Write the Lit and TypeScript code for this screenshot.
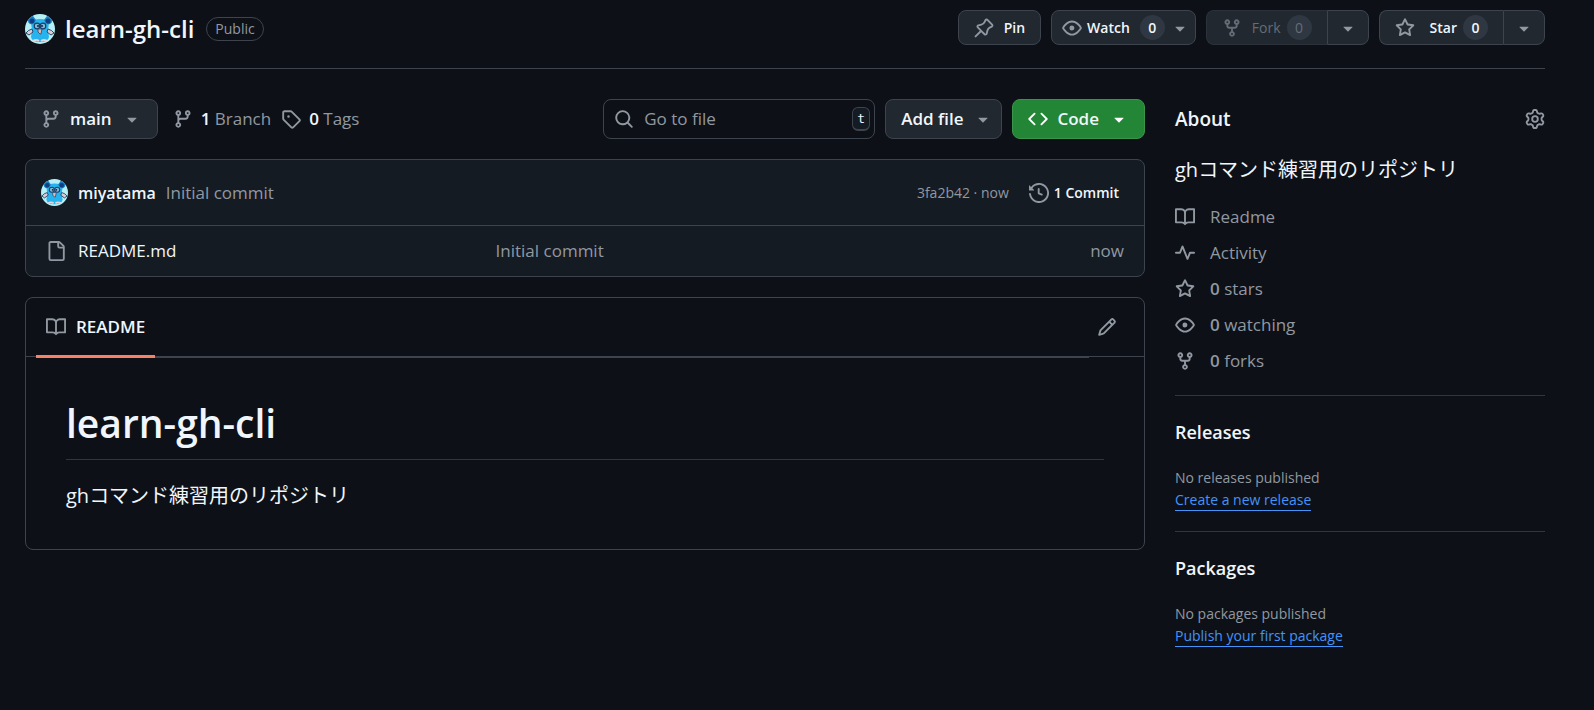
import { LitElement, html, css, svg } from "lit";
import { customElement, property } from "lit/decorators.js";

const ICONS: Record<string, string> = {
  pin: "m11.294.984 3.722 3.722a1.75 1.75 0 0 1-.504 2.826l-1.327.613a3.089 3.089 0 0 0-1.707 2.084l-.584 2.454c-.317 1.332-1.972 1.8-2.94.832L5.75 11.311 1.78 15.28a.749.749 0 1 1-1.06-1.06l3.969-3.97-2.204-2.204c-.968-.968-.5-2.623.832-2.94l2.454-.584a3.08 3.08 0 0 0 2.084-1.707l.613-1.327a1.75 1.75 0 0 1 2.826-.504ZM6.283 9.723l2.732 2.731a.25.25 0 0 0 .42-.119l.584-2.454a4.586 4.586 0 0 1 2.537-3.098l1.328-.613a.25.25 0 0 0 .072-.404l-3.722-3.722a.25.25 0 0 0-.404.072l-.613 1.328a4.584 4.584 0 0 1-3.098 2.537l-2.454.584a.25.25 0 0 0-.119.42l2.731 2.732Z",
  eye: "M8 2c1.981 0 3.671.992 4.933 2.078 1.27 1.091 2.187 2.345 2.637 3.023a1.62 1.62 0 0 1 0 1.798c-.45.678-1.367 1.932-2.637 3.023C11.67 13.008 9.981 14 8 14c-1.981 0-3.671-.992-4.933-2.078C1.797 10.83.88 9.576.43 8.898a1.62 1.62 0 0 1 0-1.798c.45-.677 1.367-1.931 2.637-3.022C4.33 2.992 6.019 2 8 2ZM1.679 7.932a.12.12 0 0 0 0 .136c.411.622 1.241 1.75 2.366 2.717C5.176 11.758 6.527 12.5 8 12.5c1.473 0 2.825-.742 3.955-1.715 1.124-.967 1.954-2.096 2.366-2.717a.12.12 0 0 0 0-.136c-.412-.621-1.242-1.75-2.366-2.717C10.824 4.242 9.473 3.5 8 3.5c-1.473 0-2.825.742-3.955 1.715-1.124.967-1.954 2.096-2.366 2.717ZM8 10a2 2 0 1 1-.001-3.999A2 2 0 0 1 8 10Z",
  fork: "M5 5.372v.878c0 .414.336.75.75.75h4.5a.75.75 0 0 0 .75-.75v-.878a2.25 2.25 0 1 1 1.5 0v.878a2.25 2.25 0 0 1-2.25 2.25h-1.5v2.128a2.251 2.251 0 1 1-1.5 0V8.5h-1.5A2.25 2.25 0 0 1 3.5 6.25v-.878a2.25 2.25 0 1 1 1.5 0ZM5 3.25a.75.75 0 1 0-1.5 0 .75.75 0 0 0 1.5 0Zm6.75.75a.75.75 0 1 0 0-1.5.75.75 0 0 0 0 1.5Zm-3 8.75a.75.75 0 1 0-1.5 0 .75.75 0 0 0 1.5 0Z",
  star: "M8 .25a.75.75 0 0 1 .673.418l1.882 3.815 4.21.612a.75.75 0 0 1 .416 1.279l-3.046 2.97.719 4.192a.751.751 0 0 1-1.088.791L8 12.347l-3.766 1.98a.75.75 0 0 1-1.088-.79l.72-4.194L.818 6.374a.75.75 0 0 1 .416-1.28l4.21-.611L7.327.668A.75.75 0 0 1 8 .25Zm0 2.445L6.615 5.5a.75.75 0 0 1-.564.41l-3.097.45 2.24 2.184a.75.75 0 0 1 .216.664l-.528 3.084 2.769-1.456a.75.75 0 0 1 .698 0l2.77 1.456-.53-3.084a.75.75 0 0 1 .216-.664l2.24-2.183-3.096-.45a.75.75 0 0 1-.564-.41L8 2.694Z",
  caret: "m4.427 7.427 3.396 3.396a.25.25 0 0 0 .354 0l3.396-3.396A.25.25 0 0 0 11.396 7H4.604a.25.25 0 0 0-.177.427Z",
  branch: "M9.5 3.25a2.25 2.25 0 1 1 3 2.122V6A2.5 2.5 0 0 1 10 8.5H6a1 1 0 0 0-1 1v1.128a2.251 2.251 0 1 1-1.5 0V5.372a2.25 2.25 0 1 1 1.5 0v1.836A2.493 2.493 0 0 1 6 7h4a1 1 0 0 0 1-1v-.628A2.25 2.25 0 0 1 9.5 3.25Zm-6 0a.75.75 0 1 0 1.5 0 .75.75 0 0 0-1.5 0Zm8.25-.75a.75.75 0 1 0 0 1.5.75.75 0 0 0 0-1.5ZM4.25 12a.75.75 0 1 0 0 1.5.75.75 0 0 0 0-1.5Z",
  tag: "M1 7.775V2.75C1 1.784 1.784 1 2.75 1h5.025c.464 0 .91.184 1.238.513l6.25 6.25a1.75 1.75 0 0 1 0 2.474l-5.026 5.026a1.75 1.75 0 0 1-2.474 0l-6.25-6.25A1.752 1.752 0 0 1 1 7.775Zm1.5 0c0 .066.026.13.073.177l6.25 6.25a.25.25 0 0 0 .354 0l5.025-5.025a.25.25 0 0 0 0-.354l-6.25-6.25a.25.25 0 0 0-.177-.073H2.75a.25.25 0 0 0-.25.25ZM6 5a1 1 0 1 1 0 2 1 1 0 0 1 0-2Z",
  search: "M10.68 11.74a6 6 0 0 1-7.922-8.982 6 6 0 0 1 8.982 7.922l3.04 3.04a.749.749 0 0 1-.326 1.275.749.749 0 0 1-.734-.215ZM11.5 7a4.499 4.499 0 1 0-8.997 0A4.499 4.499 0 0 0 11.5 7Z",
  code: "m11.28 3.22 4.25 4.25a.75.75 0 0 1 0 1.06l-4.25 4.25a.749.749 0 0 1-1.275-.326.749.749 0 0 1 .215-.734L13.94 8l-3.72-3.72a.749.749 0 0 1 .326-1.275.749.749 0 0 1 .734.215Zm-6.56 0a.751.751 0 0 1 1.042.018.751.751 0 0 1 .018 1.042L2.06 8l3.72 3.72a.749.749 0 0 1-.326 1.275.749.749 0 0 1-.734-.215L.47 8.53a.75.75 0 0 1 0-1.06Z",
  history: "m.427 1.927 1.215 1.215a8.002 8.002 0 1 1-1.6 5.685.75.75 0 1 1 1.493-.154 6.5 6.5 0 1 0 1.18-4.458l1.358 1.358A.25.25 0 0 1 3.896 6H.25A.25.25 0 0 1 0 5.75V2.104a.25.25 0 0 1 .427-.177ZM7.75 4a.75.75 0 0 1 .75.75v2.992l2.028.812a.75.75 0 0 1-.557 1.392l-2.5-1A.751.751 0 0 1 7 8.25v-3.5A.75.75 0 0 1 7.75 4Z",
  file: "M2 1.75C2 .784 2.784 0 3.75 0h6.586c.464 0 .909.184 1.237.513l2.914 2.914c.329.328.513.773.513 1.237v9.586A1.75 1.75 0 0 1 13.25 16h-9.5A1.75 1.75 0 0 1 2 14.25Zm1.75-.25a.25.25 0 0 0-.25.25v12.5c0 .138.112.25.25.25h9.5a.25.25 0 0 0 .25-.25V6h-2.75A1.75 1.75 0 0 1 9 4.25V1.5Zm6.75.062V4.25c0 .138.112.25.25.25h2.688l-.011-.013-2.914-2.914-.013-.011Z",
  book: "M0 1.75A.75.75 0 0 1 .75 1h4.253c1.227 0 2.317.59 3 1.501A3.743 3.743 0 0 1 11.006 1h4.245a.75.75 0 0 1 .75.75v10.5a.75.75 0 0 1-.75.75h-4.507a2.25 2.25 0 0 0-1.591.659l-.622.621a.75.75 0 0 1-1.06 0l-.622-.621A2.25 2.25 0 0 0 5.258 13H.75a.75.75 0 0 1-.75-.75Zm7.251 10.324.004-5.073-.002-2.253A2.25 2.25 0 0 0 5.003 2.5H1.5v9h3.757a3.75 3.75 0 0 1 1.994.574ZM8.755 4.75l-.004 7.322a3.752 3.752 0 0 1 1.992-.572H14.5v-9h-3.495a2.25 2.25 0 0 0-2.25 2.25Z",
  pencil: "M11.013 1.427a1.75 1.75 0 0 1 2.474 0l1.086 1.086a1.75 1.75 0 0 1 0 2.474l-8.61 8.61c-.21.21-.47.364-.756.445l-3.251.93a.75.75 0 0 1-.927-.928l.929-3.25c.081-.286.235-.547.445-.758l8.61-8.61Zm.176 4.823L9.75 4.81l-6.286 6.287a.253.253 0 0 0-.064.108l-.558 1.953 1.953-.558a.253.253 0 0 0 .108-.064Zm1.238-3.763a.25.25 0 0 0-.354 0L10.811 3.75l1.439 1.44 1.263-1.263a.25.25 0 0 0 0-.354Z",
  pulse: "M6 2c.306 0 .582.187.696.471L10 10.731l1.304-3.26A.751.751 0 0 1 12 7h3.25a.75.75 0 0 1 0 1.5h-2.742l-1.812 4.528a.751.751 0 0 1-1.392 0L6 4.77 4.696 8.03A.75.75 0 0 1 4 8.5H.75a.75.75 0 0 1 0-1.5h2.742l1.812-4.529A.751.751 0 0 1 6 2Z",
  gear: "M8 0a8.2 8.2 0 0 1 .701.031C9.444.095 9.99.645 10.16 1.29l.288 1.107c.018.066.079.158.212.224.231.114.454.243.668.386.123.082.233.09.299.071l1.103-.303c.644-.176 1.392.021 1.82.63.27.385.506.792.704 1.218.315.675.111 1.422-.364 1.891l-.814.806c-.049.048-.098.147-.088.294.016.257.016.515 0 .772-.01.147.038.246.088.294l.814.806c.475.469.679 1.216.364 1.891a7.977 7.977 0 0 1-.704 1.217c-.428.61-1.176.807-1.82.63l-1.102-.302c-.067-.019-.177-.011-.3.071a5.909 5.909 0 0 1-.668.386c-.133.066-.194.158-.211.224l-.29 1.106c-.168.646-.715 1.196-1.458 1.26a8.006 8.006 0 0 1-1.402 0c-.743-.064-1.289-.614-1.458-1.26l-.289-1.106c-.018-.066-.079-.158-.212-.224a5.738 5.738 0 0 1-.668-.386c-.123-.082-.233-.09-.299-.071l-1.103.303c-.644.176-1.392-.021-1.82-.63a8.12 8.12 0 0 1-.704-1.218c-.315-.675-.111-1.422.363-1.891l.815-.806c.05-.048.098-.147.088-.294a6.214 6.214 0 0 1 0-.772c.01-.147-.038-.246-.088-.294l-.815-.806C.635 6.045.431 5.298.746 4.623a7.92 7.92 0 0 1 .704-1.217c.428-.61 1.176-.807 1.82-.63l1.102.302c.067.019.177.011.3-.071.214-.143.437-.272.668-.386.133-.066.194-.158.211-.224l.29-1.106C6.009.645 6.556.095 7.299.03 7.53.01 7.764 0 8 0Zm-.571 1.525c-.036.003-.108.036-.137.146l-.289 1.105c-.147.561-.549.967-.998 1.189-.173.086-.34.183-.5.29-.417.278-.97.423-1.529.27l-1.103-.303c-.109-.03-.175.016-.195.045-.22.312-.412.644-.573.99-.014.031-.021.11.059.19l.815.806c.411.406.562.957.53 1.456a4.709 4.709 0 0 0 0 .582c.032.499-.119 1.05-.53 1.456l-.815.806c-.081.08-.073.159-.059.19.162.346.353.677.573.989.02.03.085.076.195.046l1.102-.303c.56-.153 1.113-.008 1.53.27.161.107.328.204.501.29.447.222.85.629.997 1.189l.289 1.105c.029.109.101.143.137.146a6.6 6.6 0 0 0 1.142 0c.036-.003.108-.036.137-.146l.289-1.105c.147-.561.549-.967.998-1.189.173-.086.34-.183.5-.29.417-.278.97-.423 1.529-.27l1.103.303c.109.029.175-.016.195-.045.22-.313.411-.644.573-.99.014-.031.021-.11-.059-.19l-.815-.806c-.411-.406-.562-.957-.53-1.456a4.709 4.709 0 0 0 0-.582c-.032-.499.119-1.05.53-1.456l.815-.806c.081-.08.073-.159.059-.19a6.464 6.464 0 0 0-.573-.989c-.02-.03-.085-.076-.195-.046l-1.102.303c-.56.153-1.113.008-1.53-.27a4.44 4.44 0 0 0-.501-.29c-.447-.222-.85-.629-.997-1.189l-.289-1.105c-.029-.11-.101-.143-.137-.146a6.6 6.6 0 0 0-1.142 0ZM11 8a3 3 0 1 1-6 0 3 3 0 0 1 6 0ZM9.5 8a1.5 1.5 0 1 0-3.001.001A1.5 1.5 0 0 0 9.5 8Z",
};

@customElement("gh-icon")
class GhIcon extends LitElement {
  @property() name = "";

  static styles = css`
    :host {
      display: inline-flex;
      flex: none;
      width: 20px;
      height: 20px;
      color: #9198a1;
    }
    svg {
      width: 100%;
      height: 100%;
      fill: currentColor;
    }
  `;

  render() {
    return html`<svg viewBox="0 0 16 16" aria-hidden="true">${svg`<path d=${ICONS[this.name] ?? ""}></path>`}</svg>`;
  }
}

@customElement("gh-avatar")
class GhAvatar extends LitElement {
  static styles = css`
    :host {
      display: inline-flex;
      flex: none;
      width: 30px;
      height: 30px;
      border-radius: 50%;
      overflow: hidden;
    }
    svg {
      width: 100%;
      height: 100%;
    }
  `;

  render() {
    return html`<svg viewBox="0 0 30 30" role="img" aria-label="@miyatama">
      <rect width="30" height="30" fill="#b4f0f5"></rect>
      <path d="M6 9q2-4 9-4t9 4l-1 7 1 7q-1 5-9 5t-9-5l1-7z" fill="#25b4ee"></path>
      <path d="M3 7q0-5 5-5l3 4q-2 5-6 4-2-1-2-3zM27 7q0-5-5-5l-3 4q2 5 6 4 2-1 2-3z" fill="#1a7fc4"></path>
      <circle cx="7" cy="7" r="2.5" fill="#123f80"></circle>
      <circle cx="23" cy="7" r="2.5" fill="#123f80"></circle>
      <path d="M7 15q-4 1-6 4l3 2 4-3zM23 15q4 1 6 4l-3 2-4-3z" fill="#dccbd4" stroke="#27456b"></path>
      <circle cx="12" cy="12" r="2.8" fill="#7fb9d6" stroke="#1c3c66" stroke-width="1.2"></circle>
      <circle cx="18" cy="12" r="2.8" fill="#7fb9d6" stroke="#1c3c66" stroke-width="1.2"></circle>
      <circle cx="13" cy="12" r="1" fill="#14233c"></circle>
      <circle cx="17" cy="12" r="1" fill="#14233c"></circle>
      <path d="M13 15h4l-1 5h-1l-2-2z" fill="#e5b4b6" stroke="#27456b" stroke-width=".8"></path>
      <path d="M8 27q3-2 6 0M22 27q-3-2-6 0" fill="none" stroke="#e8d3da" stroke-width="2"></path>
    </svg>`;
  }
}

@customElement("app-root")
class AppRoot extends LitElement {
  static styles = css`
    :host {
      display: block;
      box-sizing: border-box;
      min-height: 100vh;
      padding: 0 49px 0 25px;
      background: #0d1117;
      color: #f0f6fc;
      font-family: "Open Sans", "Noto Sans", "Noto Sans CJK JP", sans-serif;
      font-size: 17px;
      line-height: 24px;
    }
    * {
      box-sizing: border-box;
    }
    h1,
    h2,
    p,
    ul {
      margin: 0;
      padding: 0;
    }
    a {
      color: inherit;
      text-decoration: none;
    }
    button {
      font: inherit;
      color: inherit;
      margin: 0;
      cursor: pointer;
    }
    .muted {
      color: #9198a1;
    }
    .head {
      display: flex;
      justify-content: space-between;
      align-items: flex-start;
      height: 69px;
      padding-top: 10px;
      border-bottom: 1px solid #3d444d;
    }
    .title {
      display: flex;
      align-items: center;
      height: 38px;
    }
    .title h1 {
      margin-left: 10px;
      font-size: 24px;
      line-height: 36px;
      font-weight: 600;
    }
    .pill {
      margin-left: 12px;
      padding: 0 8px;
      border: 1px solid #3d444d;
      border-radius: 12px;
      font-size: 14px;
      line-height: 22px;
      font-weight: 500;
      color: #9198a1;
    }
    .actions,
    .group {
      display: flex;
    }
    .actions {
      gap: 10px;
    }
    .btn {
      display: inline-flex;
      align-items: center;
      height: 40px;
      padding: 0 15px;
      border: 1px solid #3d444d;
      border-radius: 8px;
      background: #212830;
      font-weight: 600;
      white-space: nowrap;
    }
    .small {
      height: 35px;
      font-size: 14px;
    }
    .label {
      margin-left: 9px;
    }
    .small .label {
      margin-left: 10px;
    }
    .count {
      min-width: 25px;
      height: 25px;
      margin-left: 6px;
      border-radius: 13px;
      background: #2f3742;
      line-height: 25px;
      text-align: center;
    }
    .watch {
      padding: 0 5px 0 10px;
    }
    .watch .label {
      margin-left: 5px;
    }
    .watch .count {
      margin: 0 5px 0 10px;
    }
    .star .label {
      margin-left: 15px;
    }
    .group .btn:first-child {
      border-radius: 8px 0 0 8px;
      border-right: 0;
    }
    .group .btn:last-child {
      width: 42px;
      padding: 0;
      justify-content: center;
      border-radius: 0 8px 8px 0;
    }
    .btn:disabled {
      color: #656c76;
      border-color: #2b323a;
      font-weight: 500;
    }
    .btn:disabled gh-icon {
      color: #656c76;
    }
    .page {
      display: grid;
      grid-template-columns: minmax(0, 1fr) 370px;
      gap: 30px;
      padding-top: 30px;
    }
    .bar {
      display: flex;
      align-items: center;
      margin-bottom: 20px;
    }
    .bar .btn .caret {
      margin-left: 10px;
    }
    .ref {
      display: flex;
      align-items: center;
      margin-left: 15px;
    }
    .ref + .ref {
      margin-left: 10px;
    }
    .ref span {
      margin-left: 8px;
    }
    b {
      font-weight: 600;
    }
    .ref b {
      color: #f0f6fc;
    }
    .search {
      display: flex;
      align-items: center;
      width: 272px;
      height: 40px;
      margin-left: auto;
      padding: 0 4px 0 10px;
      border: 1px solid #3d444d;
      border-radius: 8px;
    }
    .search input {
      flex: 1;
      min-width: 0;
      margin-left: 10px;
      padding: 0;
      border: 0;
      outline: 0;
      background: none;
      color: #f0f6fc;
      font: inherit;
    }
    .search input::placeholder {
      color: #9198a1;
      opacity: 1;
    }
    kbd {
      width: 18px;
      height: 24px;
      border: 1px solid #3d444d;
      border-bottom-width: 2px;
      border-radius: 6px;
      background: #151b23;
      font: 13px/22px "DejaVu Sans Mono", monospace;
      text-align: center;
    }
    .bar .end {
      margin-left: 10px;
    }
    .add {
      padding-right: 8px;
    }
    .primary {
      background: #238636;
      border-color: #3b9449;
    }
    .primary gh-icon {
      color: #ffffff;
    }
    .box {
      border: 1px solid #3d444d;
      border-radius: 8px;
      overflow: hidden;
    }
    .files {
      margin-bottom: 20px;
      background: #151b23;
    }
    .commit {
      display: flex;
      align-items: center;
      height: 66px;
      padding: 0 25px 0 15px;
      border-bottom: 1px solid #3d444d;
    }
    .commit gh-avatar {
      width: 27px;
      height: 27px;
      margin-right: 10px;
    }
    .commit b {
      font-size: 16px;
    }
    .commit .msg {
      margin-left: 10px;
    }
    .commit .sha {
      margin-left: auto;
      font-size: 14px;
    }
    .history {
      display: flex;
      align-items: center;
      gap: 5px;
      margin-left: 20px;
      font-size: 14px;
      font-weight: 600;
    }
    table {
      width: 100%;
      border-collapse: collapse;
      table-layout: fixed;
    }
    td {
      height: 50px;
      padding: 0;
    }
    .name {
      width: 42%;
    }
    .name div {
      display: flex;
      align-items: center;
      gap: 12px;
      padding-left: 20px;
    }
    .age {
      padding-right: 20px;
      text-align: right;
    }
    .tabs {
      display: flex;
      align-items: center;
      height: 59px;
      padding: 0 27px 0 10px;
      border-bottom: 1px solid #3d444d;
    }
    .tabs nav {
      display: flex;
      flex: 1;
      align-self: flex-start;
      height: 60px;
      margin-right: 8px;
      border-bottom: 1px solid #3d444d;
    }
    .tab {
      display: flex;
      align-items: center;
      gap: 10px;
      height: 60px;
      padding: 0 10px;
      border-bottom: 3px solid #f78166;
      font-weight: 600;
    }
    .edit {
      display: flex;
      padding: 0;
      border: 0;
      background: none;
    }
    .markdown {
      padding: 41px 40px 38px;
    }
    .markdown h1 {
      margin-bottom: 21px;
      padding-bottom: 11px;
      border-bottom: 1px solid #2f363f;
      font-size: 39px;
      line-height: 50px;
      font-weight: 600;
    }
    .text {
      font-size: 20px;
      line-height: 30px;
    }
    h2 {
      font-size: 18px;
      line-height: 30px;
      font-weight: 600;
    }
    .about-head {
      display: flex;
      justify-content: space-between;
      align-items: center;
      height: 40px;
    }
    .about-head h2 {
      font-size: 19px;
    }
    .about {
      padding-bottom: 22px;
    }
    .about .text {
      margin: 16px 0 20px;
    }
    .facts {
      display: grid;
      gap: 12px;
      list-style: none;
      color: #9198a1;
    }
    .facts a {
      display: flex;
      align-items: center;
      gap: 15px;
    }
    .section {
      padding: 21px 0 20px;
      border-top: 1px solid #2f363f;
      font-size: 14px;
      line-height: 22px;
    }
    .section h2 {
      margin-bottom: 20px;
    }
    .section a {
      display: inline-block;
      border-bottom: 1px solid #4493f8;
      line-height: 20px;
      color: #4493f8;
    }
  `;

  private facts = [
    { icon: "book", label: "Readme" },
    { icon: "pulse", label: "Activity" },
    { icon: "star", count: 0, label: "stars" },
    { icon: "eye", count: 0, label: "watching" },
    { icon: "fork", count: 0, label: "forks" },
  ];

  render() {
    return html`
      <header class="head">
        <div class="title">
          <gh-avatar></gh-avatar>
          <h1><a href="#">learn-gh-cli</a></h1>
          <span class="pill">Public</span>
        </div>
        <div class="actions">
          <button class="btn small"><gh-icon name="pin"></gh-icon><span class="label">Pin</span></button>
          <button class="btn small watch">
            <gh-icon name="eye"></gh-icon><span class="label">Watch</span><span class="count">0</span><gh-icon name="caret"></gh-icon>
          </button>
          <div class="group">
            <button class="btn small" disabled>
              <gh-icon name="fork"></gh-icon><span class="label">Fork</span><span class="count">0</span>
            </button>
            <button class="btn small" aria-label="Fork options"><gh-icon name="caret"></gh-icon></button>
          </div>
          <div class="group">
            <button class="btn small star">
              <gh-icon name="star"></gh-icon><span class="label">Star</span><span class="count">0</span>
            </button>
            <button class="btn small" aria-label="Star lists"><gh-icon name="caret"></gh-icon></button>
          </div>
        </div>
      </header>

      <div class="page">
        <main>
          <div class="bar">
            <button class="btn">
              <gh-icon name="branch"></gh-icon><span class="label">main</span><gh-icon class="caret" name="caret"></gh-icon>
            </button>
            <a class="ref muted" href="#"><gh-icon name="branch"></gh-icon><span><b>1</b> Branch</span></a>
            <a class="ref muted" href="#"><gh-icon name="tag"></gh-icon><span><b>0</b> Tags</span></a>
            <label class="search">
              <gh-icon name="search"></gh-icon>
              <input type="text" placeholder="Go to file" aria-label="Go to file" />
              <kbd>t</kbd>
            </label>
            <button class="btn end add">Add file<gh-icon class="caret" name="caret"></gh-icon></button>
            <button class="btn end primary">
              <gh-icon name="code"></gh-icon><span class="label">Code</span><gh-icon class="caret" name="caret"></gh-icon>
            </button>
          </div>

          <section class="box files">
            <div class="commit">
              <gh-avatar></gh-avatar>
              <a href="#"><b>miyatama</b></a>
              <a class="msg muted" href="#">Initial commit</a>
              <span class="sha muted">3fa2b42 · now</span>
              <a class="history" href="#"><gh-icon name="history"></gh-icon>1 Commit</a>
            </div>
            <table aria-label="Files">
              <tbody>
                <tr>
                  <td class="name">
                    <div><gh-icon name="file"></gh-icon><a href="#">README.md</a></div>
                  </td>
                  <td class="muted"><a href="#">Initial commit</a></td>
                  <td class="age muted">now</td>
                </tr>
              </tbody>
            </table>
          </section>

          <section class="box">
            <div class="tabs">
              <nav>
                <a class="tab" href="#"><gh-icon name="book"></gh-icon>README</a>
              </nav>
              <button class="edit" aria-label="Edit file"><gh-icon name="pencil"></gh-icon></button>
            </div>
            <article class="markdown">
              <h1>learn-gh-cli</h1>
              <p class="text">ghコマンド練習用のリポジトリ</p>
            </article>
          </section>
        </main>

        <aside>
          <section class="about">
            <div class="about-head">
              <h2>About</h2>
              <button class="edit" aria-label="Edit repository details"><gh-icon name="gear"></gh-icon></button>
            </div>
            <p class="text">ghコマンド練習用のリポジトリ</p>
            <ul class="facts">
              ${this.facts.map(
                (f) => html`<li>
                  <a href="#"><gh-icon name=${f.icon}></gh-icon><span>${f.count !== undefined ? html`<b>${f.count}</b> ` : ""}${f.label}</span></a>
                </li>`
              )}
            </ul>
          </section>
          <section class="section">
            <h2>Releases</h2>
            <p class="muted">No releases published</p>
            <a href="#">Create a new release</a>
          </section>
          <section class="section">
            <h2>Packages</h2>
            <p class="muted">No packages published</p>
            <a href="#">Publish your first package</a>
          </section>
        </aside>
      </div>
    `;
  }
}
